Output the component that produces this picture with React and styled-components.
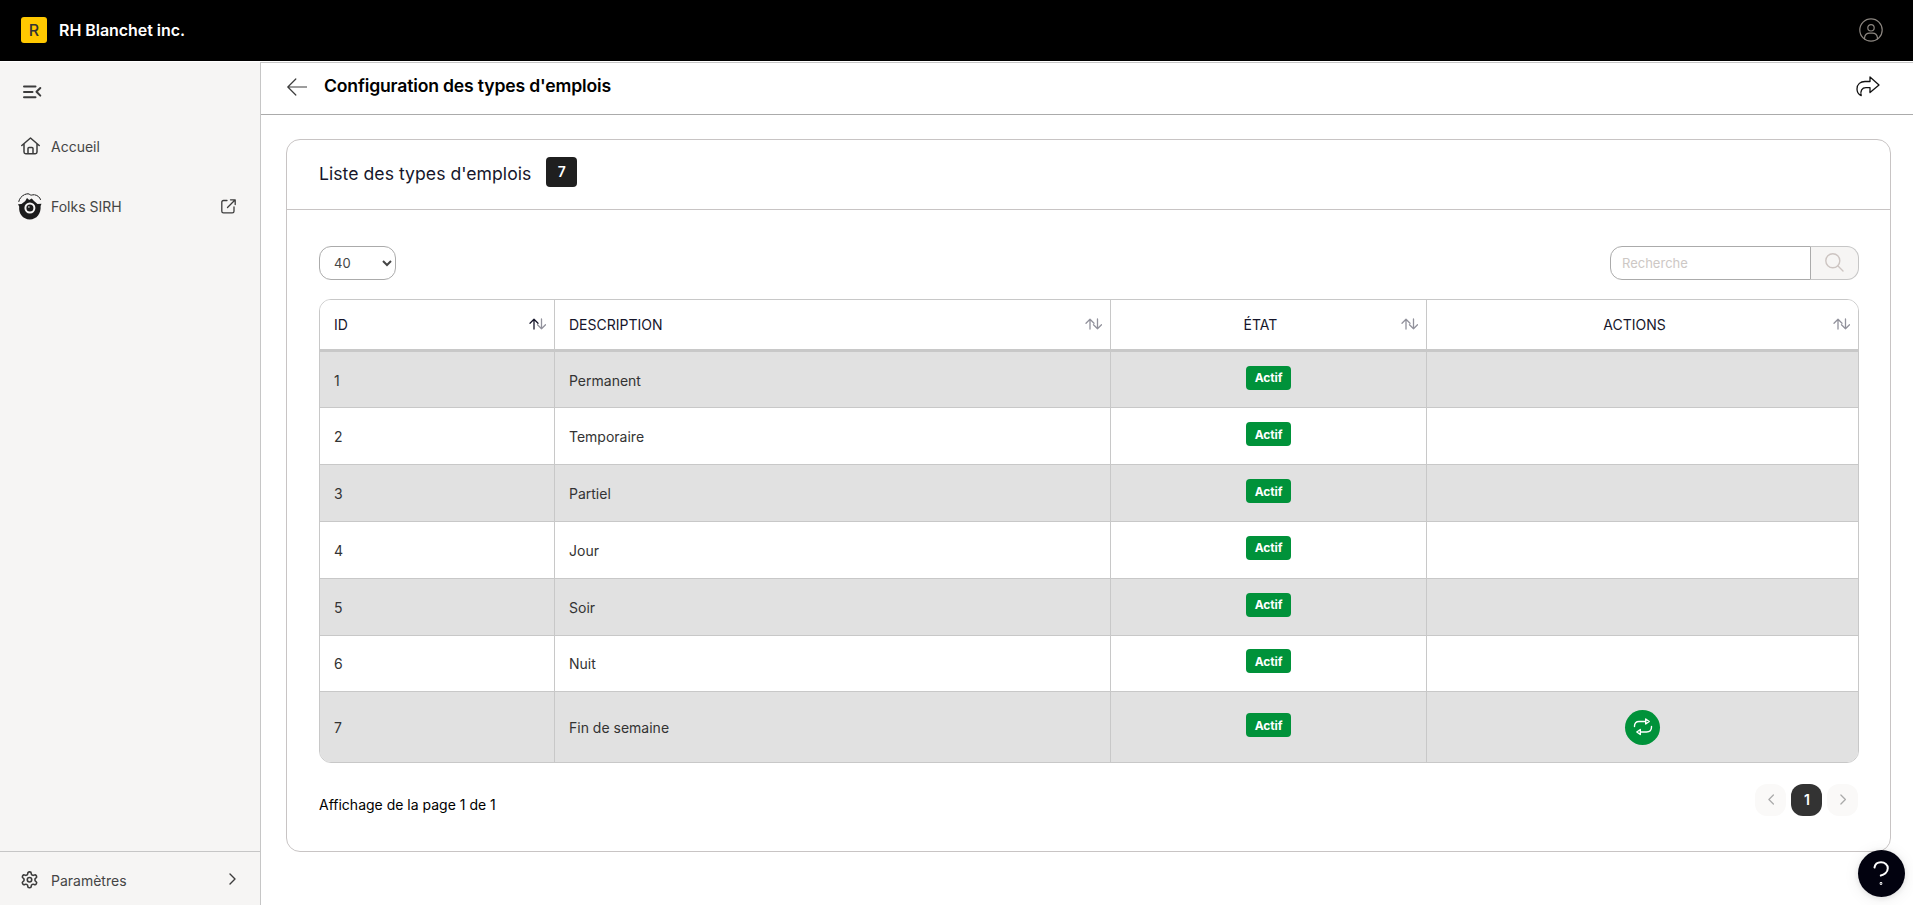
import React, { useState } from "react";
import styled, { createGlobalStyle } from "styled-components";

const GlobalStyle = createGlobalStyle`
  * {
    box-sizing: border-box;
  }
  body {
    margin: 0;
    background: #fff;
    font-family: Inter, "Liberation Sans", sans-serif;
    font-size: 14px;
    color: #333;
  }
  button, select, input {
    font-family: inherit;
  }
`;

const Page = styled.div`
  display: flex;
  flex-direction: column;
  height: 905px;
  overflow: hidden;
`;

const TopBar = styled.header`
  display: flex;
  align-items: center;
  justify-content: space-between;
  flex: none;
  height: 61px;
  padding: 0 30px 2px 21px;
  background: #000;
`;

const Brand = styled.div`
  display: flex;
  align-items: center;
  gap: 12px;
  color: #fff;
  font-size: 16px;
  font-weight: 600;
  letter-spacing: -0.05px;
`;

const BrandLogo = styled.span`
  display: flex;
  align-items: center;
  justify-content: center;
  width: 26px;
  height: 26px;
  border-radius: 3px;
  background: #ffc800;
  color: #333;
  font-size: 16px;
  font-weight: 500;
`;

const Body = styled.div`
  display: flex;
  flex: 1;
  min-height: 0;
`;

const Sidebar = styled.nav`
  display: flex;
  flex-direction: column;
  flex: none;
  width: 261px;
  margin-top: 1px;
  background: #f6f5f4;
  border-right: 1px solid #c6c6c6;
`;

const MenuToggle = styled.div`
  height: 54px;
  padding: 23px 0 0 23px;
`;

const NavItem = styled.a`
  display: flex;
  align-items: center;
  height: 60px;
  padding: 0 24px 0 17px;
  color: #454545;
  cursor: pointer;
`;

const NavIcon = styled.span`
  display: flex;
  justify-content: center;
  width: 25px;
  margin-right: 9px;
`;

const NavLabel = styled.span`
  flex: 1;
`;

const Settings = styled(NavItem)`
  height: 54px;
  margin-top: auto;
  border-top: 1px solid #c6c6c6;

  ${NavLabel} {
    padding-top: 3px;
  }
`;

const Main = styled.main`
  display: flex;
  flex-direction: column;
  flex: 1;
  margin-top: 1px;
`;

const PageHeader = styled.div`
  display: flex;
  align-items: center;
  height: 53px;
  padding: 0 33px 4px 26px;
  border-top: 1px solid #c6c6c6;
  border-bottom: 1px solid #ababab;
`;

const PageTitle = styled.h1`
  flex: 1;
  margin: 0 0 2px 17px;
  color: #000;
  font-size: 17.6px;
  font-weight: 600;
  letter-spacing: -0.17px;
`;

const Card = styled.section`
  height: 713px;
  margin: 24px 22px 0 25px;
  border: 1px solid #c8c4c4;
  border-radius: 14px;
`;

const CardHeader = styled.div`
  display: flex;
  align-items: center;
  height: 70px;
  padding: 0 32px 2px;
  border-bottom: 1px solid #c8c4c4;
`;

const CardTitle = styled.h2`
  margin: 0;
  color: #16162b;
  font-size: 17.6px;
  font-weight: 400;
  letter-spacing: 0.04px;
`;

const Count = styled.span`
  display: flex;
  align-items: center;
  justify-content: center;
  width: 31px;
  height: 30px;
  margin: 0 0 4px 15px;
  border-radius: 4px;
  background: #1f1f1f;
  color: #fff;
  font-size: 14px;
  font-weight: 600;
`;

const CardBody = styled.div`
  padding: 36px 31px 0 32px;
`;

const Toolbar = styled.div`
  display: flex;
  justify-content: space-between;
`;

const LengthSelect = styled.select`
  width: 77px;
  height: 34px;
  padding: 0 0 0 10px;
  border: 1px solid #ababab;
  border-radius: 12px;
  background: #fff;
  color: #454545;
  font-size: 13px;
`;

const Search = styled.div`
  display: flex;
  width: 249px;
  height: 34px;
`;

const SearchInput = styled.input`
  width: 201px;
  padding: 0 11px;
  border: 1px solid #ababab;
  border-radius: 12px 0 0 12px;
  font-size: 13px;
  outline: none;

  &::placeholder {
    color: #cdc8c5;
  }
`;

const SearchButton = styled.button`
  display: flex;
  align-items: center;
  justify-content: center;
  flex: 1;
  padding: 0 0 2px;
  border: 1px solid #c6c6c6;
  border-left: 0;
  border-radius: 0 12px 12px 0;
  background: #f6f5f4;
`;

const Table = styled.div`
  margin-top: 19px;
  border: 1px solid #c8c8c8;
  border-radius: 12px;
  overflow: hidden;
`;

const Row = styled.div`
  display: grid;
  grid-template-columns: 235px 556px 316px 1fr;
  height: ${(props) => props.$height}px;
  background: ${(props) => (props.$odd ? "#e1e1e1" : "#fff")};

  & + & {
    border-top: 1px solid #c8c8c8;
  }
`;

const HeadRow = styled(Row)`
  height: 51px;
  border-bottom: 2px solid #c8c8c8;
`;

const Cell = styled.div`
  display: flex;
  align-items: center;
  justify-content: ${(props) => (props.$center ? "center" : "flex-start")};
  padding: 1px 14px 0;
  border-right: 1px solid #c8c8c8;

  &:last-child {
    border-right: 0;
  }
`;

const HeadCell = styled(Cell)`
  padding: 0 8px 1px 14px;
  color: #16162b;
`;

const HeadLabel = styled.span`
  flex: 1;
  padding-right: 5px;
  text-align: ${(props) => (props.$center ? "center" : "left")};
`;

const Badge = styled.span`
  display: flex;
  align-items: center;
  justify-content: center;
  width: 45px;
  height: 24px;
  margin-bottom: 5px;
  border-radius: 4px;
  background: #00923a;
  color: #fff;
  font-size: 12px;
  font-weight: 700;
  letter-spacing: -0.1px;
`;

const RoundButton = styled.button`
  display: flex;
  align-items: center;
  justify-content: center;
  width: 35px;
  height: 35px;
  padding: 0 0 3px;
  border: 0;
  border-radius: 50%;
  background: #00923a;
`;

const Footer = styled.div`
  display: flex;
  justify-content: space-between;
  padding: 21px 1px 0 0;
`;

const PageInfo = styled.div`
  padding-top: 12px;
  color: #000;
`;

const Pagination = styled.div`
  display: flex;
  gap: 5px;
`;

const PageButton = styled.button`
  display: flex;
  align-items: center;
  justify-content: center;
  width: 31px;
  height: 32px;
  padding: 0 0 1px 1px;
  border: 0;
  border-radius: 12px;
  background: ${(props) => (props.$active ? "#333" : "#faf9f8")};
  color: ${(props) => (props.$active ? "#fff" : "#aaa")};
  font-size: 14px;
  font-weight: 600;
`;

const HelpButton = styled.button`
  position: fixed;
  right: 8px;
  bottom: 8px;
  width: 47px;
  height: 47px;
  padding: 0;
  border: 0;
  border-radius: 50%;
  background: #02020f;
  box-shadow: 0 1px 6px rgba(0, 0, 0, 0.1), 0 2px 16px rgba(0, 0, 0, 0.08);
`;

const Icon = styled.svg.attrs((props) => ({
  fill: "none",
  stroke: "currentColor",
  strokeWidth: props.strokeWidth || 1.4,
  strokeLinecap: "round",
  strokeLinejoin: "round",
}))`
  display: block;
  flex: none;
  color: ${(props) => props.$color || "#3c3c3c"};
`;

const UserIcon = () => (
  <Icon width="24" height="24" strokeWidth={1.2} $color="#8c8680">
    <circle cx="12" cy="12" r="11.2" />
    <circle cx="12" cy="9.8" r="3.2" />
    <path d="M5.5 20.8v-1c.5-2.900 2.800-4.600 5-4.600h3c2.200 0 4.500 1.700 5 4.600v1" />
  </Icon>
);

const MenuIcon = () => (
  <Icon width="19" height="14" strokeWidth={2}>
    <path d="M1 1.500h11.500M1 6.900h8.500M1 12.300h11.500M17.300 3l-3.800 3.800 3.800 3.800" />
  </Icon>
);

const HomeIcon = () => (
  <Icon width="20" height="18" viewBox="-1 0 20 18" strokeWidth={1.5}>
    <path d="M.8 8.500L9.500 1l8.700 7.500M3 7v8q0 1.700 1.700 1.700h9.600q1.700 0 1.700-1.700V7M7 16.500v-5q0-1 1-1h3q1 0 1 1v5" />
  </Icon>
);

const FolksIcon = () => (
  <Icon width="24" height="27" strokeWidth={1} $color="#1c1c1c">
    <path d="M.8 8.500C1.500 4.500 5.500 1 10 .8c1.500 0 2 1.400 3.500 1.300C18 .8 21.500 3.500 22.500 6.500" strokeDasharray="9 1" />
    <path
      d="M0 11.300l3.500-.3 3.800-3 1.700-3 2.200 2 2.500-1.500 2.300 2.500 3.500 3 4-.2-.9 2.200c.6 7.500-3.800 13.400-10.800 13.400S.4 20.500 1.200 13.500z"
      fill="currentColor"
      stroke="none"
    />
    <circle cx="11.900" cy="15" r="4.500" stroke="#f6f5f4" strokeWidth="2" />
    <circle cx="10.900" cy="14" r=".8" fill="#f6f5f4" stroke="none" />
  </Icon>
);

const ExternalIcon = () => (
  <Icon width="15" height="15" strokeWidth={1.3}>
    <path d="M6 1.500H2.500q-1.700 0-1.700 1.700v9q0 1.700 1.700 1.700h8.800q1.700 0 1.700-1.700V8M9.500.8h4.700v4.700M14 1L6.500 8.500" />
  </Icon>
);

const GearIcon = () => (
  <Icon width="19" height="20" viewBox="0 -1 24 24" strokeWidth={2}>
    <path d="M12.220 2h-.44a2 2 0 0 0-2 2v.18a2 2 0 0 1-1 1.730l-.43.25a2 2 0 0 1-2 0l-.15-.08a2 2 0 0 0-2.730.73l-.22.38a2 2 0 0 0 .73 2.730l.15.1a2 2 0 0 1 1 1.720v.51a2 2 0 0 1-1 1.740l-.15.09a2 2 0 0 0-.73 2.730l.22.38a2 2 0 0 0 2.730.73l.15-.08a2 2 0 0 1 2 0l.43.25a2 2 0 0 1 1 1.730V20a2 2 0 0 0 2 2h.44a2 2 0 0 0 2-2v-.18a2 2 0 0 1 1-1.730l.43-.25a2 2 0 0 1 2 0l.15.08a2 2 0 0 0 2.730-.73l.22-.39a2 2 0 0 0-.73-2.730l-.15-.08a2 2 0 0 1-1-1.740v-.5a2 2 0 0 1 1-1.740l.15-.09a2 2 0 0 0 .73-2.730l-.22-.38a2 2 0 0 0-2.730-.73l-.15.08a2 2 0 0 1-2 0l-.43-.25a2 2 0 0 1-1-1.730V4a2 2 0 0 0-2-2z" />
    <circle cx="12" cy="12" r="2.800" />
  </Icon>
);

const BackIcon = () => (
  <Icon width="20" height="18" strokeWidth={1.2}>
    <path d="M8.800 1L.8 9l8 8M.8 9h18.700" />
  </Icon>
);

const ShareIcon = () => (
  <Icon width="24" height="21" strokeWidth={1.3} $color="#111">
    <path d="M14 1l9 8-9 7.500v-4.800h-4c-4 0-6 3-4.800 8C2.500 18.500 1 16 1 13c0-5 3.500-7.500 8-7.500h5z" />
  </Icon>
);

const SearchIcon = () => (
  <Icon width="19" height="19" strokeWidth={1.4} $color="#cdc5c2">
    <circle cx="7.800" cy="7.800" r="7" />
    <path d="M13 13l5 5" />
  </Icon>
);

const SortIcon = ({ asc }) => (
  <Icon width="17" height="12" strokeWidth={1.3} $color="#92929c">
    <path d="M5 11V1.200M1 5.200l4-4 4 4" stroke={asc ? "#16162b" : "currentColor"} />
    <path d="M12.500 1v9.800M8.500 6.800l4 4 4-4" />
  </Icon>
);

const SwapIcon = () => (
  <Icon width="20" height="19" strokeWidth={1.4} $color="#fff">
    <path d="M1.500 9.500V9q0-4.500 4.500-4.500h6.500M12.700 2v5l3.500-2.500zM18.500 9.500v.5q0 5-5 5H7.500M7.300 12.500v5L3.800 15z" />
  </Icon>
);

const Chevron = ({ left, size = 10, ...props }) => (
  <Icon width={size * 0.7} height={size + 2} viewBox="0 0 7 12" {...props}>
    <path d={left ? "M6 1L1 6l5 5" : "M1 1l5 5-5 5"} />
  </Icon>
);

const columns = [
  { key: "id", label: "ID", asc: true },
  { key: "description", label: "DESCRIPTION" },
  { key: "state", label: "ÉTAT", center: true },
  { key: "actions", label: "ACTIONS", center: true },
];

const jobTypes = [
  { id: 1, name: "Permanent" },
  { id: 2, name: "Temporaire" },
  { id: 3, name: "Partiel" },
  { id: 4, name: "Jour" },
  { id: 5, name: "Soir" },
  { id: 6, name: "Nuit" },
  { id: 7, name: "Fin de semaine", editable: true },
];

const rowHeight = (row, index) => {
  if (row.editable) return 71;
  return index === 0 ? 56.4 : 56.8;
};

const JobTypeTable = ({ rows }) => (
  <Table>
    <HeadRow>
      {columns.map((column) => (
        <HeadCell key={column.key}>
          <HeadLabel $center={column.center}>{column.label}</HeadLabel>
          <SortIcon asc={column.asc} />
        </HeadCell>
      ))}
    </HeadRow>
    {rows.map((row, index) => (
      <Row key={row.id} $odd={index % 2 === 0} $height={rowHeight(row, index)}>
        <Cell>{row.id}</Cell>
        <Cell>{row.name}</Cell>
        <Cell $center>
          <Badge>Actif</Badge>
        </Cell>
        <Cell $center>
          {row.editable && (
            <RoundButton>
              <SwapIcon />
            </RoundButton>
          )}
        </Cell>
      </Row>
    ))}
  </Table>
);

const App = () => {
  const [search, setSearch] = useState("");
  const rows = jobTypes.filter((row) =>
    row.name.toLowerCase().includes(search.toLowerCase())
  );

  return (
    <Page>
      <GlobalStyle />
      <TopBar>
        <Brand>
          <BrandLogo>R</BrandLogo>
          RH Blanchet inc.
        </Brand>
        <UserIcon />
      </TopBar>
      <Body>
        <Sidebar>
          <MenuToggle>
            <MenuIcon />
          </MenuToggle>
          <NavItem>
            <NavIcon>
              <HomeIcon />
            </NavIcon>
            <NavLabel>Accueil</NavLabel>
          </NavItem>
          <NavItem>
            <NavIcon>
              <FolksIcon />
            </NavIcon>
            <NavLabel>Folks SIRH</NavLabel>
            <ExternalIcon />
          </NavItem>
          <Settings>
            <NavIcon>
              <GearIcon />
            </NavIcon>
            <NavLabel>Paramètres</NavLabel>
            <Chevron />
          </Settings>
        </Sidebar>
        <Main>
          <PageHeader>
            <BackIcon />
            <PageTitle>Configuration des types d'emplois</PageTitle>
            <ShareIcon />
          </PageHeader>
          <Card>
            <CardHeader>
              <CardTitle>Liste des types d'emplois</CardTitle>
              <Count>{jobTypes.length}</Count>
            </CardHeader>
            <CardBody>
              <Toolbar>
                <LengthSelect defaultValue="40">
                  <option>10</option>
                  <option>20</option>
                  <option>40</option>
                </LengthSelect>
                <Search>
                  <SearchInput
                    placeholder="Recherche"
                    value={search}
                    onChange={(e) => setSearch(e.target.value)}
                  />
                  <SearchButton>
                    <SearchIcon />
                  </SearchButton>
                </Search>
              </Toolbar>
              <JobTypeTable rows={rows} />
              <Footer>
                <PageInfo>Affichage de la page 1 de 1</PageInfo>
                <Pagination>
                  <PageButton>
                    <Chevron left size={9} $color="#aaa" />
                  </PageButton>
                  <PageButton $active>1</PageButton>
                  <PageButton>
                    <Chevron size={9} $color="#aaa" />
                  </PageButton>
                </Pagination>
              </Footer>
            </CardBody>
          </Card>
        </Main>
      </Body>
      <HelpButton>
        <Icon width="47" height="47" strokeWidth={2} $color="#fff">
          <path d="M16.500 17.500c.5-3.300 3.200-5.200 6.500-5.200 3.900 0 6.800 2.600 6.800 6 0 4.200-4 6.700-7 7.200" />
          <circle cx="23" cy="33.500" r=".4" />
        </Icon>
      </HelpButton>
    </Page>
  );
};

export default App;
